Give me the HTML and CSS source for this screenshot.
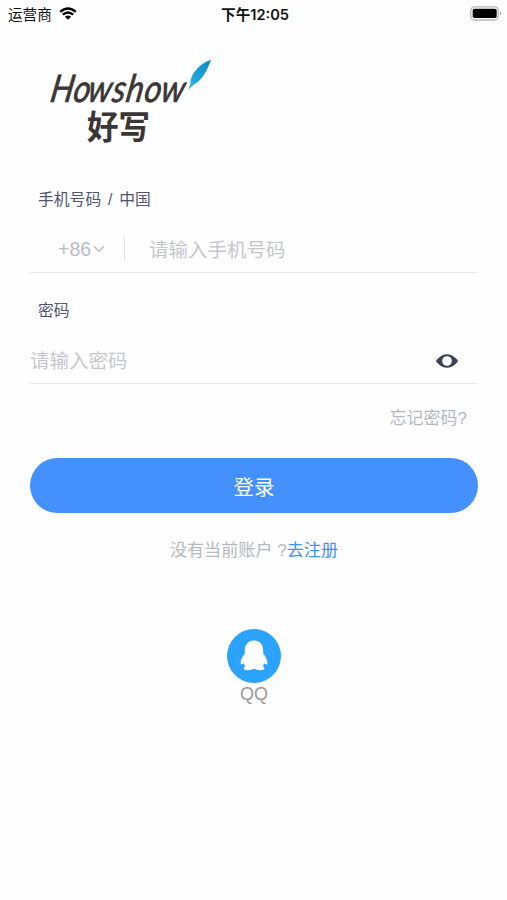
FILE: index.html
```
<!DOCTYPE html>
<html lang="zh-CN">
<head>
    <meta charset="UTF-8">
    <meta name="viewport" content="width=device-width, initial-scale=1.0">
    <title>好写 - 登录</title>
    <link rel="stylesheet" href="styles.css">
</head>
<body>
    <header class="status-bar">
        <div class="carrier">
            <span>运营商</span>
            <svg class="wifi" viewBox="0 0 18 13" width="18" height="13">
                <path d="M1.2 4.9Q9-1.9 16.8 4.9M3.8 7.7Q9 3.1 14.2 7.7" fill="none" stroke="#000" stroke-width="2.4"/>
                <path d="M5.9 9.8Q9 7.1 12.1 9.8L9 12.8Z"/>
            </svg>
        </div>
        <div class="clock">下午12:05</div>
        <svg class="battery" viewBox="0 0 32 15" width="32" height="15">
            <rect x="0.8" y="0.8" width="27.6" height="13.2" rx="3.8" fill="#fff" stroke="#b5b5b5" stroke-width="1.3"/>
            <rect x="2.7" y="2.7" width="24" height="9.4" rx="1.8"/>
            <path d="M30 5.3Q32 7.4 30 9.5Z" fill="#999"/>
        </svg>
    </header>

    <main class="login">
        <svg class="logo" viewBox="0 0 180 100" width="180" height="100">
            <defs>
                <linearGradient id="feather" x1="0" y1="1" x2="1" y2="0">
                    <stop offset="0" stop-color="#2bb7e6"/>
                    <stop offset="1" stop-color="#0789c4"/>
                </linearGradient>
            </defs>
            <text class="logo-en" x="0 24 39 64.5 79 98 115" y="0" transform="translate(9 52) skewX(-10) scale(0.96 1.12)">Howshow</text>
            <text class="logo-cn" x="47" y="89" textLength="63" lengthAdjust="spacingAndGlyphs">好写</text>
            <path d="M171 10C163 12 150 22 150.5 34L148 40L153 35C163 30 167 20 171 10Z" fill="url(#feather)"/>
        </svg>

        <form class="form">
            <label class="label" for="phone">手机号码 / 中国</label>
            <div class="field">
                <div class="area-code">
                    <span>+86</span>
                    <svg viewBox="0 0 12 8" width="12" height="8">
                        <path d="M1 1.3L6 6.2L11 1.3" fill="none" stroke="#b9bcc6" stroke-width="1.6"/>
                    </svg>
                </div>
                <input class="input" id="phone" type="tel" placeholder="请输入手机号码">
            </div>

            <label class="label label-password" for="password">密码</label>
            <div class="field field-password">
                <input class="input" id="password" type="password" placeholder="请输入密码">
                <svg class="eye" viewBox="0 0 22 14" width="22" height="14">
                    <path d="M0 7Q0.4 5.9 2 4.6Q6.2 0.2 11 0.2T20 4.6Q21.6 5.9 22 7Q21.6 8.1 20 9.4Q15.8 13.8 11 13.8T2 9.4Q0.4 8.1 0 7Z" fill="#3b4252"/>
                    <circle cx="11" cy="7" r="4.8" fill="#fff"/>
                </svg>
            </div>

            <a class="forgot">忘记密码?</a>
            <button class="submit" type="button">登录</button>
            <p class="register">没有当前账户 ?<a class="register-link">去注册</a></p>
        </form>

        <div class="third-party">
            <svg viewBox="0 0 54 54" width="54" height="54">
                <circle cx="27" cy="27" r="27" fill="#2ba2fb"/>
                <path d="M27 11.5C21 11.5 17.8 16 17.8 21.5V24.5C15 28 13.4 31.5 13.6 34.5C13.8 36.2 15.4 35.6 16.8 34C17 35.4 17.5 36.3 18.4 37.2C16.4 38.2 16.2 39.6 17.2 40.4C18.9 41.6 24.9 41.3 27 39.6C29.1 41.3 35.1 41.6 36.8 40.4C37.8 39.6 37.6 38.2 35.6 37.2C36.5 36.3 37 35.4 37.2 34C38.6 35.6 40.2 36.2 40.4 34.5C40.6 31.5 39 28 36.2 24.5V21.5C36.2 16 33 11.5 27 11.5Z" fill="#fff"/>
            </svg>
            <span class="third-party-name">QQ</span>
        </div>
    </main>
</body>
</html>
```

FILE: styles.css
```
* {
    margin: 0;
    padding: 0;
    box-sizing: border-box;
}

body {
    font-family: "Liberation Sans", "Noto Sans CJK SC", sans-serif;
    background: #fefefe;
    min-height: 100vh;
}

.status-bar {
    display: grid;
    grid-template-columns: 1fr auto 1fr;
    align-items: center;
    height: 28px;
    padding: 0 5px 2px 8px;
    color: #111;
}

.carrier {
    display: flex;
    align-items: center;
    gap: 7px;
    font-size: 14.6px;
}

.clock {
    font-family: Inter, "Noto Sans CJK SC", sans-serif;
    font-size: 14.6px;
    font-weight: 600;
}

.battery {
    justify-self: end;
}

.login {
    padding: 22px 29px 0 30px;
}

.logo {
    display: block;
    margin-left: 10px;
}

.logo-en {
    font-family: Lato, sans-serif;
    font-size: 34px;
    font-style: italic;
    fill: #3a3635;
    stroke: #3a3635;
    stroke-width: 0.6px;
}

.logo-cn {
    font-family: "Noto Sans CJK SC", sans-serif;
    font-size: 33px;
    font-weight: 700;
    fill: #3a3635;
}

.form {
    display: flex;
    flex-direction: column;
    padding-top: 38px;
}

.label {
    padding-left: 8px;
    font-size: 15.8px;
    line-height: 24px;
    word-spacing: 2.4px;
    color: #50556f;
}

.label-password {
    margin-top: 26px;
}

.field {
    display: flex;
    align-items: center;
    height: 61px;
    padding-top: 14px;
    border-bottom: 1px solid #e9e9ed;
}

.area-code {
    display: flex;
    align-items: center;
    gap: 2px;
    width: 95px;
    height: 25px;
    margin-right: 24px;
    padding-left: 28px;
    border-right: 1px solid #e6e6ea;
    font-size: 19.5px;
    color: #b9bcc6;
}

.input {
    flex: 1;
    min-width: 0;
    padding-top: 2px;
    border: none;
    outline: none;
    background: none;
    font-family: inherit;
    font-size: 19.5px;
    color: #50556f;
}

.input::placeholder {
    color: #c6c7cc;
}

.field-password {
    padding-right: 20px;
    padding-top: 15px;
}

.forgot {
    align-self: flex-end;
    margin: 22px 11px 0 0;
    font-size: 17px;
    line-height: 26px;
    color: #b4b8c2;
}

.submit {
    height: 55px;
    margin-top: 26px;
    border: none;
    border-radius: 28px;
    background: #4390fe;
    font-family: inherit;
    font-size: 20.5px;
    color: #fff;
}

.register {
    margin-top: 25px;
    font-size: 17.1px;
    line-height: 26px;
    text-align: center;
    color: #b4b8c0;
}

.register-link {
    color: #4390fe;
}

.third-party {
    display: flex;
    flex-direction: column;
    align-items: center;
    margin-top: 65px;
}

.third-party-name {
    font-size: 18px;
    line-height: 22px;
    color: #999;
}
```
